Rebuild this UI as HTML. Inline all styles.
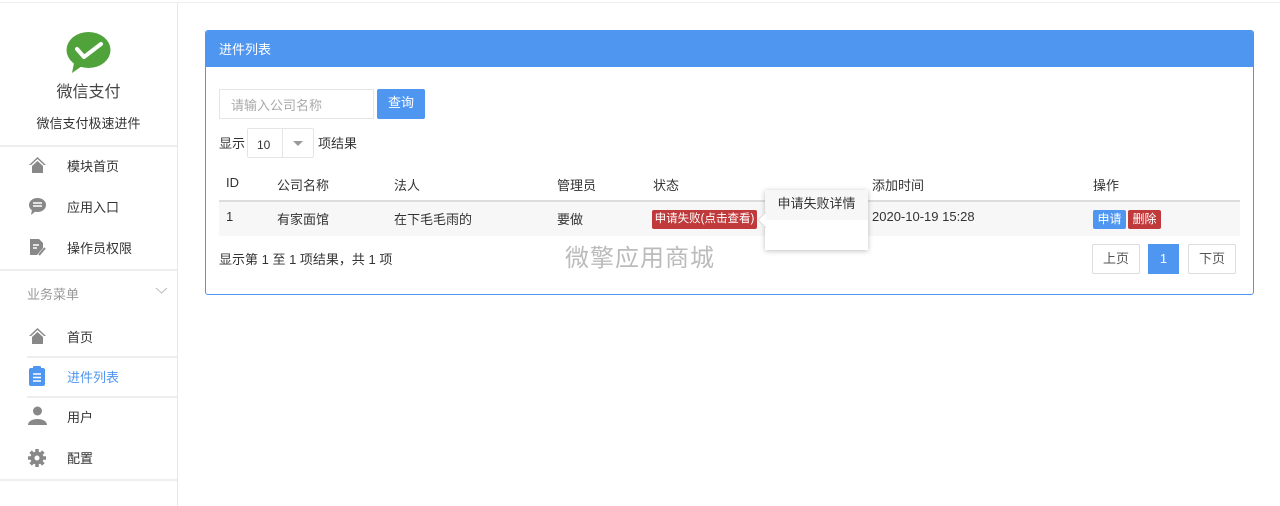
<!DOCTYPE html>
<html><head><meta charset="utf-8"><style>
*{box-sizing:border-box;margin:0;padding:0}
body{width:1280px;height:506px;overflow:hidden;background:#fff;font-family:"Liberation Sans","Noto Sans CJK SC",sans-serif;color:#333;font-size:13px;position:relative}
.abs{position:absolute}
.top{left:0;top:0;width:1280px;height:3px;border-bottom:1px solid #eee}
.side{left:0;top:3px;width:178px;height:503px;border-right:1px solid #e8e8e8}
.hl{position:absolute;height:2px;background:#eee}
.mi{position:absolute;left:67px;font-size:13px;color:#333}
.ic{position:absolute;left:28px}
.panel{left:205px;top:30px;width:1049px;height:265px;border:1px solid #4f96f0;border-radius:3px;overflow:hidden}
.ph{height:36px;background:#4f96f0;color:#fff;font-size:13px;padding:8px 0 0 13px}
.t{position:absolute;font-size:13px;white-space:nowrap}
</style></head><body>
<div class="abs top"></div>
<div class="abs side">
<svg class="abs" style="left:66px;top:28px" width="45" height="43" viewBox="0 0 45 43"><ellipse cx="22.5" cy="19" rx="22" ry="18" fill="#4fa33a"/><path d="M8 32 L6 42 L16 35Z" fill="#4fa33a"/><path d="M11 18 L18 26 L35 13" stroke="#fff" stroke-width="4" fill="none" stroke-linecap="round" stroke-linejoin="round"/></svg>
<div class="t" style="left:0;width:177px;text-align:center;top:75px;font-size:16px;color:#444">微信支付</div>
<div class="t" style="left:0;width:177px;text-align:center;top:110px;font-size:13px">微信支付极速进件</div>
</div>
<div class="hl" style="left:0;top:145px;width:177px"></div>
<div class="hl" style="left:0;top:269px;width:177px"></div>
<div class="hl" style="left:27px;top:356px;width:150px"></div>
<div class="hl" style="left:27px;top:396px;width:150px"></div>
<div class="hl" style="left:0;top:479px;width:177px"></div>
<svg class="ic" style="top:156px" width="19" height="18" viewBox="0 0 19 18"><path d="M1 9 L9.5 1 L18 9 L16 9 L9.5 3 L3 9Z M4 10 L9.5 5 L15 10 V17 H4Z" fill="#888"/></svg>
<div class="mi" style="top:156px">模块首页</div>
<svg class="ic" style="top:197px" width="19" height="18" viewBox="0 0 19 18"><ellipse cx="9.5" cy="8" rx="8.5" ry="7" fill="#888"/><path d="M4 13 L3 18 L8 14Z" fill="#888"/><path d="M5 6h9M5 9h9" stroke="#fff" stroke-width="1.5"/></svg>
<div class="mi" style="top:197px">应用入口</div>
<svg class="ic" style="top:238px" width="19" height="19" viewBox="0 0 19 19"><path d="M2 1 H11 L15 5 V10 L9 17 H2Z" fill="#888"/><path d="M5 7h6M5 10h4" stroke="#fff" stroke-width="1.4"/><path d="M11 17 L17 10" stroke="#888" stroke-width="2"/></svg>
<div class="mi" style="top:238px">操作员权限</div>
<div class="t" style="left:27px;top:284px;color:#999">业务菜单</div>
<svg class="abs" style="left:155px;top:287px" width="13" height="8"><path d="M1 1 L6.5 6 L12 1" stroke="#bbb" fill="none"/></svg>
<svg class="ic" style="top:327px" width="19" height="18" viewBox="0 0 19 18"><path d="M1 9 L9.5 1 L18 9 L16 9 L9.5 3 L3 9Z M4 10 L9.5 5 L15 10 V17 H4Z" fill="#888"/></svg>
<div class="mi" style="top:327px">首页</div>
<svg class="ic" style="top:366px" width="18" height="20" viewBox="0 0 18 20"><rect x="1" y="2" width="16" height="18" rx="2" fill="#4f96f0"/><rect x="5" y="0" width="8" height="4" rx="1" fill="#4f96f0"/><path d="M5 8h8M5 11.5h8M5 15h8" stroke="#fff" stroke-width="1.5"/></svg>
<div class="mi" style="top:367px;color:#4f96f0">进件列表</div>
<svg class="ic" style="top:406px" width="19" height="19" viewBox="0 0 19 19"><circle cx="9.5" cy="5" r="4.5" fill="#888"/><path d="M0 19 C0 11 19 11 19 19Z" fill="#888"/></svg>
<div class="mi" style="top:407px">用户</div>
<svg class="ic" style="top:449px" width="18" height="18" viewBox="0 0 18 18"><circle cx="9" cy="9" r="6.5" fill="#888"/><path d="M9 0v18M0 9h18M2.6 2.6l12.8 12.8M15.4 2.6L2.6 15.4" stroke="#888" stroke-width="3.5"/><circle cx="9" cy="9" r="2.5" fill="#fff"/></svg>
<div class="mi" style="top:448px">配置</div>

<div class="abs panel"><div class="ph">进件列表</div></div>
<div class="abs" style="left:219px;top:89px;width:155px;height:30px;border:1px solid #e5e5e5"></div>
<div class="t" style="left:231px;top:95px;color:#aaa">请输入公司名称</div>
<div class="abs" style="left:377px;top:89px;width:48px;height:30px;background:#4f96f0;border-radius:2px;color:#fff;text-align:center;line-height:28px">查询</div>
<div class="t" style="left:219px;top:133px">显示</div>
<div class="abs" style="left:247px;top:128px;width:67px;height:30px;border:1px solid #e5e5e5;border-radius:2px"></div>
<div class="abs" style="left:282px;top:128px;width:1px;height:30px;background:#e5e5e5"></div>
<div class="t" style="left:257px;top:138px;font-size:12px">10</div>
<svg class="abs" style="left:293px;top:141px" width="10" height="6"><path d="M0 0h10L5 5Z" fill="#999"/></svg>
<div class="t" style="left:318px;top:133px">项结果</div>

<div class="t" style="left:226px;top:175px">ID</div>
<div class="t" style="left:277px;top:175px">公司名称</div>
<div class="t" style="left:394px;top:175px">法人</div>
<div class="t" style="left:557px;top:175px">管理员</div>
<div class="t" style="left:653px;top:175px">状态</div>
<div class="t" style="left:872px;top:175px">添加时间</div>
<div class="t" style="left:1093px;top:175px">操作</div>
<div class="abs" style="left:219px;top:200px;width:1021px;height:2px;background:#ddd"></div>
<div class="abs" style="left:219px;top:202px;width:1021px;height:34px;background:#f7f7f7"></div>
<div class="t" style="left:226px;top:209px">1</div>
<div class="t" style="left:277px;top:209px">有家面馆</div>
<div class="t" style="left:394px;top:209px">在下毛毛雨的</div>
<div class="t" style="left:557px;top:209px">要做</div>
<div class="abs" style="left:652px;top:210px;width:105px;height:19px;background:#c0393b;border-radius:2px;color:#fff;font-size:11.5px;line-height:18px;text-align:center">申请失败(点击查看)</div>
<div class="t" style="left:872px;top:209px">2020-10-19 15:28</div>
<div class="abs" style="left:1093px;top:210px;width:33px;height:19px;background:#4f96f0;border-radius:2px;color:#fff;font-size:12px;line-height:18px;text-align:center">申请</div>
<div class="abs" style="left:1128px;top:210px;width:33px;height:19px;background:#c0393b;border-radius:2px;color:#fff;font-size:12px;line-height:18px;text-align:center">删除</div>
<div class="abs" style="left:765px;top:190px;width:103px;height:60px;background:#fff;box-shadow:0 1px 5px rgba(0,0,0,.25)"><div style="height:30px;background:#f7f7f7;text-align:center;line-height:28px">申请失败详情</div></div>
<svg class="abs" style="left:757px;top:212px" width="9" height="16"><path d="M9 0 L1 8 L9 16Z" fill="#fff"/><path d="M9 0 L1 8 L9 16" stroke="#ddd" fill="none"/></svg>
<div class="t" style="left:219px;top:249px">显示第 1 至 1 项结果，共 1 项</div>
<div class="t" style="left:565px;top:238px;font-size:24px;color:#bbb;letter-spacing:1px">微擎应用商城</div>
<div class="abs" style="left:1092px;top:244px;width:48px;height:30px;border:1px solid #ddd;border-radius:2px;text-align:center;line-height:28px;color:#555">上页</div>
<div class="abs" style="left:1148px;top:244px;width:31px;height:30px;background:#4f96f0;color:#fff;text-align:center;line-height:30px">1</div>
<div class="abs" style="left:1188px;top:244px;width:48px;height:30px;border:1px solid #ddd;border-radius:2px;text-align:center;line-height:28px;color:#555">下页</div>
</body></html>
